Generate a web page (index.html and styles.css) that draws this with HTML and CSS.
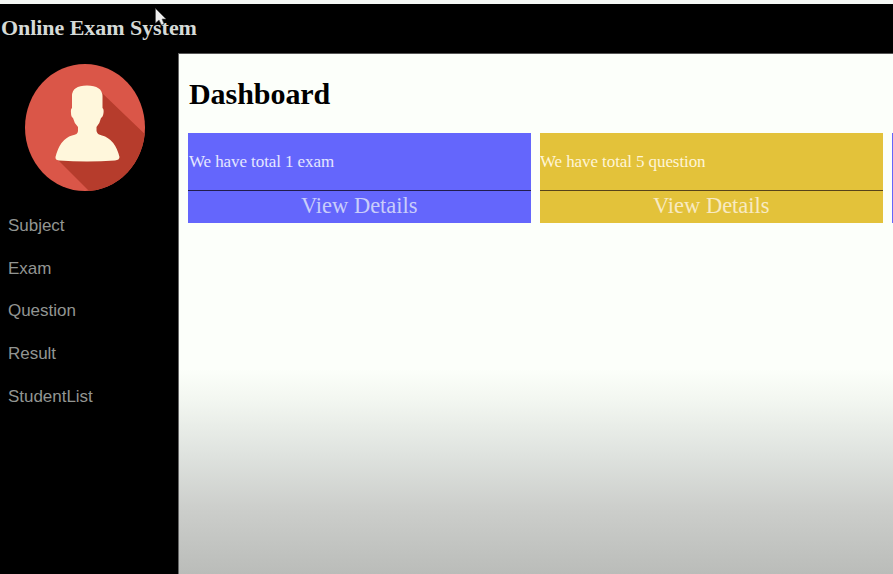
FILE: index.html
```html
<!DOCTYPE html>
<html lang="en">
<head>
<meta charset="utf-8">
<title>Online Exam System</title>
<link rel="stylesheet" href="styles.css">
</head>
<body>
<header class="topbar"><span class="brand">Online Exam System</span></header>
<div class="layout">
  <aside class="sidebar">
    <svg class="avatar" viewBox="0 0 120 127" preserveAspectRatio="none">
      <defs><clipPath id="disc"><ellipse cx="60" cy="63.5" rx="60" ry="63.5"/></clipPath></defs>
      <g clip-path="url(#disc)">
        <rect width="120" height="127" fill="#da5648"/>
        <path d="M76 28L125 75V130H67L33 96L60 60Z" fill="#b63c2c"/>
      </g>
      <path d="M47 32Q47 21.500 62 21.500Q77 21.500 77.500 32V44Q79 45 78.500 49Q78 53 76 54Q75 59 71.500 63V67Q72 70.500 77 71.500Q90 75 94.500 93Q94.500 96 90 96.500Q62 98.500 34 96.500Q30 96 30.500 93Q35 75 47 71.500Q53 70.500 53 67V63Q49 59 48 54Q46 53 46 49Q45.500 45 47 44Z" fill="#fff7dc"/>
    </svg>
    <nav class="menu">
      <a>Subject</a>
      <a>Exam</a>
      <a>Question</a>
      <a>Result</a>
      <a>StudentList</a>
    </nav>
  </aside>
  <main class="content">
    <h1>Dashboard</h1>
    <div class="cards">
      <section class="card blue"><p>We have total 1 exam</p><a>View Details</a></section>
      <section class="card gold"><p>We have total 5 question</p><a>View Details</a></section>
      <section class="card blue"></section>
    </div>
  </main>
</div>
<svg class="pointer" viewBox="0 0 12 18"><path d="M.5 .5V15L4 12L6.500 17L9 16L7 11H11Z" fill="#eee" stroke="#555" stroke-width=".6"/></svg>
</body>
</html>
```
FILE: styles.css
```css
* { box-sizing: border-box; }
body {
  margin: 0;
  height: 574px;
  overflow: hidden;
  display: flex;
  flex-direction: column;
  background: #000;
  font-family: "Liberation Serif", serif;
}
.topbar {
  flex: 0 0 53px;
  border-top: 4px solid #f5f8f5;
  background: #000;
  padding-top: 11px;
}
.brand {
  display: block;
  font-size: 22px;
  line-height: 26px;
  font-weight: bold;
  padding-left: 1px;
  letter-spacing: -0.05px;
  color: #d5dad7;
  white-space: nowrap;
}
.layout { flex: 1; display: flex; min-height: 0; }
.sidebar {
  flex: 0 0 178px;
  padding-top: 11px;
  background: #000;
}
.avatar { display: block; width: 120px; height: 127px; margin-left: 25px; }
.menu {
  display: flex;
  flex-direction: column;
  margin-top: 14px;
  padding-left: 8px;
  font: 17px/42.7px "Liberation Sans", sans-serif;
  letter-spacing: -0.03px;
  color: #929592;
}
.content {
  flex: 1;
  min-width: 0;
  overflow: hidden;
  border-top: 1px solid #555;
  border-left: 1px solid #666;
  padding: 20px 0 0 9px;
  background: linear-gradient(#fcfffa 0, #fcfffa 315px, #f3f7f1 345px, #dfe3df 400px, #cccecb 455px, #babcb9 521px);
}
h1 {
  margin: 0 0 20px;
  font-size: 30px;
  line-height: 39px;
  letter-spacing: -0.05px;
  padding-left: 1px;
  color: #000;
}
.cards { display: flex; gap: 9.5px; }
.card { flex: 0 0 342.5px; height: 90px; }
.blue { background: #6466fc; color: #e5e7ff; }
.gold { background: #e3c23a; color: #fff5d7; }
.card p {
  margin: 0;
  height: 58px;
  border-bottom: 1px solid #211c4c;
  padding-left: 1px;
  font-size: 17px;
  letter-spacing: -0.09px;
  line-height: 57px;
  white-space: nowrap;
}
.gold p { border-color: #57431a; padding-left: 0; }
.card a { display: block; text-align: center; font-size: 22.5px; line-height: 29px; }
.blue a { color: #c9cdfa; }
.gold a { color: #f8eac2; }
.pointer { position: absolute; left: 155px; top: 8px; width: 12px; height: 18px; }
```
